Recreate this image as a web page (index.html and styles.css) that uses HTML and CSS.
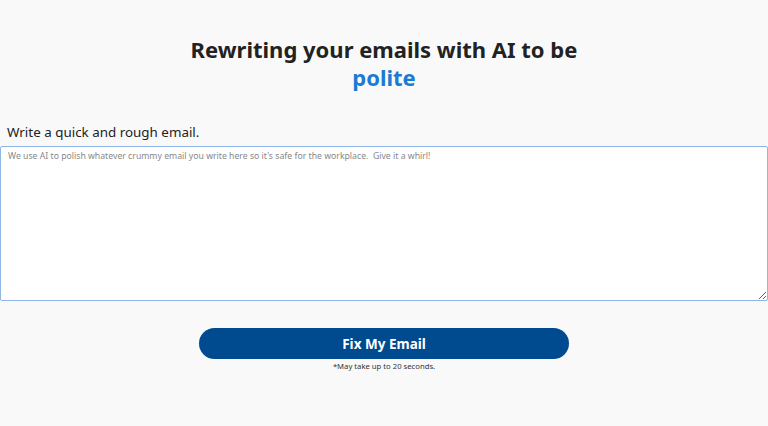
FILE: index.html
```html
<!DOCTYPE html>
<html>
<head>
<meta charset="utf-8">
<link rel="stylesheet" href="styles.css">
</head>
<body>
<main class="page">
  <h1 class="title">Rewriting your emails with AI to be<br><span class="accent">polite</span></h1>
  <label class="label" for="email">Write a quick and rough email.</label>
  <textarea id="email" class="input" placeholder="We use AI to polish whatever crummy email you write here so it's safe for the workplace.  Give it a whirl!"></textarea>
  <div class="actions">
    <button class="btn">Fix My Email</button>
    <p class="note">*May take up to 20 seconds.</p>
  </div>
</main>
</body>
</html>
```
FILE: styles.css
```css
html, body {
  margin: 0;
  padding: 0;
  background: #f9f9f9;
}
.page {
  font-family: "Noto Sans", "Open Sans", sans-serif;
  color: #222;
  display: flex;
  flex-direction: column;
}
.title {
  margin: 35px 0 0;
  text-align: center;
  font-size: 22px;
  line-height: 28px;
  font-weight: 700;
  color: #222;
}
.accent {
  color: #1a7bd0;
}
.label {
  margin-top: 32px;
  padding-left: 7px;
  font-size: 13.4px;
  line-height: 18px;
  color: #222;
}
.input {
  box-sizing: border-box;
  margin: 5px 0 0;
  width: 100%;
  height: 155px;
  border: 1px solid #8fb6e6;
  border-radius: 2px;
  background: #fff;
  padding: 3px 7px;
  font-family: "Noto Sans", "Open Sans", sans-serif;
  font-size: 8.7px;
  color: #333;
  resize: vertical;
}
.input::placeholder {
  color: #888;
}
.actions {
  display: flex;
  flex-direction: column;
  align-items: center;
  margin-top: 27px;
}
.btn {
  width: 370px;
  height: 31px;
  border: none;
  border-radius: 16px;
  background: #004b8f;
  color: #fff;
  font-family: "Noto Sans", "Open Sans", sans-serif;
  font-weight: 700;
  font-size: 13.5px;
  cursor: pointer;
}
.note {
  margin: 2px 0 0;
  font-size: 7.7px;
  color: #333;
}
```
